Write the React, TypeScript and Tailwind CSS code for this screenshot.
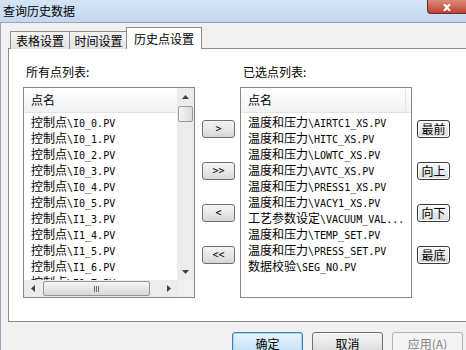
import React from "react";

const leftItems = [
  "控制点\\I0_0.PV",
  "控制点\\I0_1.PV",
  "控制点\\I0_2.PV",
  "控制点\\I0_3.PV",
  "控制点\\I0_4.PV",
  "控制点\\I0_5.PV",
  "控制点\\I1_3.PV",
  "控制点\\I1_4.PV",
  "控制点\\I1_5.PV",
  "控制点\\I1_6.PV",
  "控制点\\I1_7.PV",
];

const rightItems = [
  "温度和压力\\AIRTC1_XS.PV",
  "温度和压力\\HITC_XS.PV",
  "温度和压力\\LOWTC_XS.PV",
  "温度和压力\\AVTC_XS.PV",
  "温度和压力\\PRESS1_XS.PV",
  "温度和压力\\VACY1_XS.PV",
  "工艺参数设定\\VACUUM_VAL...",
  "温度和压力\\TEMP_SET.PV",
  "温度和压力\\PRESS_SET.PV",
  "数据校验\\SEG_NO.PV",
];

function Pt({ t }: { t: string }) {
  const i = t.indexOf("\\");
  return (
    <div className="h-[16px] shrink-0 whitespace-nowrap pl-[7px] leading-[16px]">
      <span>{t.slice(0, i)}</span>
      <span className="font-['DejaVu_Sans_Mono',monospace] text-[10px]">{t.slice(i)}</span>
    </div>
  );
}

function Tri({ dir }: { dir: "up" | "down" | "left" | "right" }) {
  const pts = {
    up: "0,4 7,4 3.5,0",
    down: "0,0 7,0 3.5,4",
    left: "4,0 4,7 0,3.5",
    right: "0,0 0,7 4,3.5",
  }[dir];
  const w = dir === "up" || dir === "down" ? 7 : 4;
  const h = dir === "up" || dir === "down" ? 4 : 7;
  return (
    <svg width={w} height={h} viewBox={`0 0 ${w} ${h}`}>
      <polygon points={pts} fill="#404040" />
    </svg>
  );
}

function MoveBtn({ label }: { label: string }) {
  return (
    <div className="flex h-[18px] w-[33px] items-center justify-center rounded-[3px] border border-[#707070] bg-linear-to-b from-[#f4f4f4] via-[#e8e8e8] to-[#d6d6d6] font-['DejaVu_Sans_Mono',monospace] text-[10px] leading-none">
      {label}
    </div>
  );
}

function OrderBtn({ label }: { label: string }) {
  return (
    <div className="flex h-[18px] w-[33px] items-center justify-center rounded-[3px] border border-[#3a3a3a] bg-linear-to-b from-[#fafafa] to-[#dcdcdc] text-[12px] leading-none shadow-[inset_0_0_0_1px_#ffffff]">
      {label}
    </div>
  );
}

function Header({ sep }: { sep?: boolean }) {
  return (
    <div className="flex h-[25px] shrink-0 items-center border-b border-[#e2e3e5] bg-linear-to-b from-[#ffffff] to-[#f1f2f4]">
      <div className="flex-1 pl-[7px] leading-[16px]">点名</div>
      {sep && <div className="mr-[5px] h-[22px] w-px bg-[#e2e3e5]" />}
    </div>
  );
}

export default function App() {
  return (
    <div className="h-[350px] w-[466px] overflow-hidden bg-[#f0f0f0] font-['Noto_Sans_CJK_SC',sans-serif] text-[12px] text-black">
      {/* title bar */}
      <div className="flex h-[22px] items-start justify-between bg-linear-to-b from-[#d4e4f6] to-[#c3d8ef]">
        <div className="pl-[3px] pt-[3px] leading-[16px]">查询历史数据</div>
        <div className="flex h-[14px] w-[39px] items-end justify-center rounded-bl-[4px] border-b border-l border-[#6b2a22] bg-linear-to-b from-[#d9897b] to-[#c0402f] pb-[2px]">
          <svg width="10" height="7" viewBox="0 0 10 7">
            <path d="M2 0 L8 7 M8 0 L2 7" stroke="#ffffff" strokeWidth="2.2" />
          </svg>
        </div>
      </div>

      <div className="h-[328px] border-l border-t border-[#9aa6b5]">
        {/* tabs */}
        <div className="flex h-[26px] items-end pl-[9px] pt-[4px]">
          <div className="h-[18px] w-[60px] border border-b-0 border-[#898c95] bg-linear-to-b from-[#f3f3f3] to-[#e3e3e3] pt-[1px] text-center leading-[16px]">
            表格设置
          </div>
          <div className="h-[18px] w-[58px] border border-b-0 border-l-0 border-[#898c95] bg-linear-to-b from-[#f3f3f3] to-[#e3e3e3] pt-[1px] text-center leading-[16px]">
            时间设置
          </div>
          <div className="relative z-10 -ml-[2px] h-[22px] w-[76px] border border-b-0 border-[#898c95] bg-white pt-[3px] text-center leading-[16px]">
            历史点设置
          </div>
        </div>

        {/* tab panel */}
        <div className="-mt-px ml-[7px] flex h-[274px] w-[470px] items-start border border-[#898c95] bg-white pt-[15px]">
          {/* all points */}
          <div className="ml-[14px] w-[172px]">
            <div className="h-[16px] pl-[3px] leading-[16px]">所有点列表:</div>
            <div className="mt-[7px] flex h-[211px] flex-col border border-[#828790] bg-white">
              <div className="flex h-[192px]">
                <div className="flex flex-1 flex-col overflow-hidden">
                  <Header />
                  <div className="flex flex-col pt-[1px]">
                    {leftItems.map((t) => (
                      <Pt key={t} t={t} />
                    ))}
                  </div>
                </div>
                <div className="flex w-[17px] flex-col bg-[#ececec]">
                  <div className="flex h-[17px] items-center justify-center">
                    <Tri dir="up" />
                  </div>
                  <div className="mx-[1px] mt-[1px] h-[16px] rounded-[2px] border border-[#979797] bg-linear-to-r from-[#f4f4f4] to-[#dcdcdc]" />
                  <div className="flex-1" />
                  <div className="flex h-[17px] items-center justify-center">
                    <Tri dir="down" />
                  </div>
                </div>
              </div>
              <div className="flex h-[17px] bg-[#ececec]">
                <div className="flex w-[17px] items-center justify-center">
                  <Tri dir="left" />
                </div>
                <div className="ml-[2px] mt-[1px] flex h-[15px] w-[107px] items-center justify-center rounded-[2px] border border-[#979797] bg-linear-to-b from-[#f4f4f4] to-[#d8d8d8]">
                  <div className="flex gap-[1px]">
                    <div className="h-[6px] w-px bg-[#6a6a6a]" />
                    <div className="h-[6px] w-px bg-[#6a6a6a]" />
                    <div className="h-[6px] w-px bg-[#6a6a6a]" />
                  </div>
                </div>
                <div className="flex-1" />
                <div className="flex w-[17px] items-center justify-center">
                  <Tri dir="right" />
                </div>
                <div className="w-[17px] bg-[#f0f0f0]" />
              </div>
            </div>
          </div>

          {/* move buttons */}
          <div className="ml-[7px] mt-[56px] flex flex-col gap-[24px]">
            <MoveBtn label=">" />
            <MoveBtn label=">>" />
            <MoveBtn label="<" />
            <MoveBtn label="<<" />
          </div>

          {/* selected points */}
          <div className="ml-[5px] w-[172px]">
            <div className="h-[16px] pl-[3px] leading-[16px]">已选点列表:</div>
            <div className="mt-[7px] flex h-[211px] flex-col border border-[#828790] bg-white">
              <Header sep />
              <div className="flex flex-col pt-[1px]">
                {rightItems.map((t) => (
                  <Pt key={t} t={t} />
                ))}
              </div>
            </div>
          </div>

          {/* order buttons */}
          <div className="ml-[5px] mt-[56px] flex flex-col gap-[24px]">
            <OrderBtn label="最前" />
            <OrderBtn label="向上" />
            <OrderBtn label="向下" />
            <OrderBtn label="最底" />
          </div>
        </div>

        {/* dialog buttons */}
        <div className="mt-[10px] flex gap-[9px] pl-[231px]">
          <div className="flex h-[23px] w-[71px] items-center justify-center rounded-[3px] border border-[#3c7fb1] bg-linear-to-b from-[#e8f4fc] to-[#bfe0f7] shadow-[inset_0_0_0_1px_#a6d6f5]">
            确定
          </div>
          <div className="flex h-[23px] w-[71px] items-center justify-center rounded-[3px] border border-[#707070] bg-linear-to-b from-[#f4f4f4] via-[#e8e8e8] to-[#d6d6d6]">
            取消
          </div>
          <div className="flex h-[23px] w-[71px] items-center justify-center rounded-[3px] border border-[#adb2b5] bg-[#f4f4f4] text-[#838383]">
            应用(<span className="underline">A</span>)
          </div>
        </div>
      </div>
    </div>
  );
}
